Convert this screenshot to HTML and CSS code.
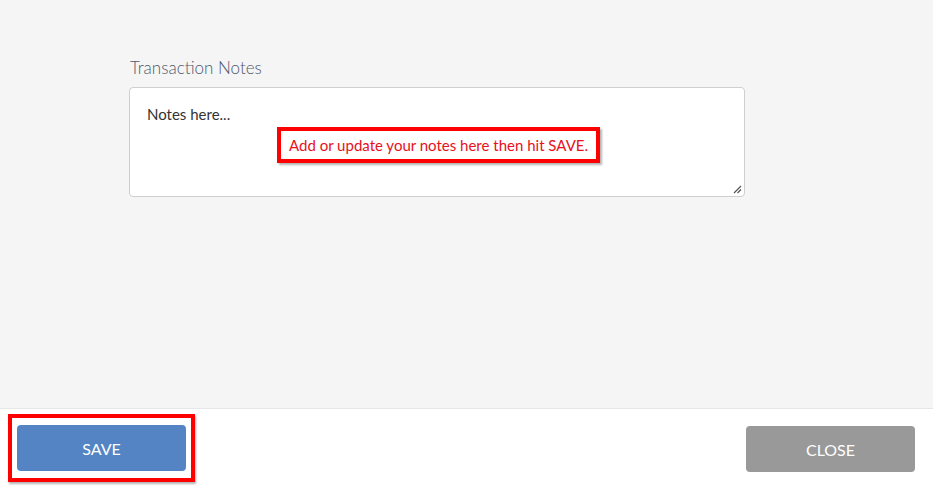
FILE: index.html
```html
<!DOCTYPE html>
<html>
<head>
<meta charset="utf-8">
<link rel="stylesheet" href="styles.css">
</head>
<body>
<div class="page">
  <main class="content">
    <div class="field">
      <div class="label">Transaction Notes</div>
      <div class="notes">
        <div class="notes-text">Notes here...</div>
        <div class="callout-row">
          <div class="callout">Add or update your notes here then hit SAVE.</div>
        </div>
        <svg class="grip" width="10" height="10" viewBox="0 0 10 10">
          <path d="M9 2 L2 9 M9 5.5 L5.5 9" stroke="#555" stroke-width="1.2" fill="none"/>
        </svg>
      </div>
    </div>
  </main>
  <footer class="footer">
    <div class="highlight">
      <button class="btn btn-save">SAVE</button>
    </div>
    <button class="btn btn-close">CLOSE</button>
  </footer>
</div>
</body>
</html>
```
FILE: styles.css
```css
html, body {
  margin: 0;
  padding: 0;
}
body {
  font-family: Lato, "Open Sans", sans-serif;
  background: #f5f5f5;
}
.page {
  width: 933px;
  height: 487px;
  display: flex;
  flex-direction: column;
}
.content {
  height: 408px;
  background: #f5f5f5;
  padding: 58px 0 0 129px;
  box-sizing: border-box;
}
.label {
  font-size: 17px;
  line-height: 20px;
  color: #4d586c;
  font-weight: 300;
  padding-left: 1px;
  margin-bottom: 9px;
}
.notes {
  position: relative;
  width: 616px;
  height: 110px;
  box-sizing: border-box;
  background: #fff;
  border: 1px solid #cfcfcf;
  border-radius: 4px;
  padding: 16px 17px 0 17px;
}
.notes-text {
  font-size: 15px;
  line-height: 20px;
  color: #333;
}
.callout-row {
  display: flex;
  justify-content: center;
  padding-left: 3px;
  margin-top: 3px;
}
.callout {
  border: 4px solid #ff0000;
  background: #fff;
  color: #e8101c;
  font-size: 15px;
  line-height: 20px;
  padding: 4px 8px;
  box-shadow: 2px 2px 2px rgba(0,0,0,0.3);
}
.grip {
  position: absolute;
  right: 2px;
  bottom: 2px;
}
.footer {
  flex: 1;
  background: #fff;
  border-top: 1px solid #e6e6e6;
  display: flex;
  justify-content: space-between;
  align-items: flex-start;
  padding: 5px 18px 0 8px;
}
.highlight {
  border: 4px solid #ff0000;
  padding: 7px 5px;
  background: #fff;
  box-shadow: 1px 2px 2px rgba(0,0,0,0.3);
}
.btn {
  width: 169px;
  height: 46px;
  border: none;
  border-radius: 4px;
  color: #fff;
  font-family: Lato, "Open Sans", sans-serif;
  font-size: 16px;
  display: block;
  padding: 0;
}
.btn-save {
  background: #5584c4;
}
.btn-close {
  background: #999999;
  margin-top: 12px;
}
```
